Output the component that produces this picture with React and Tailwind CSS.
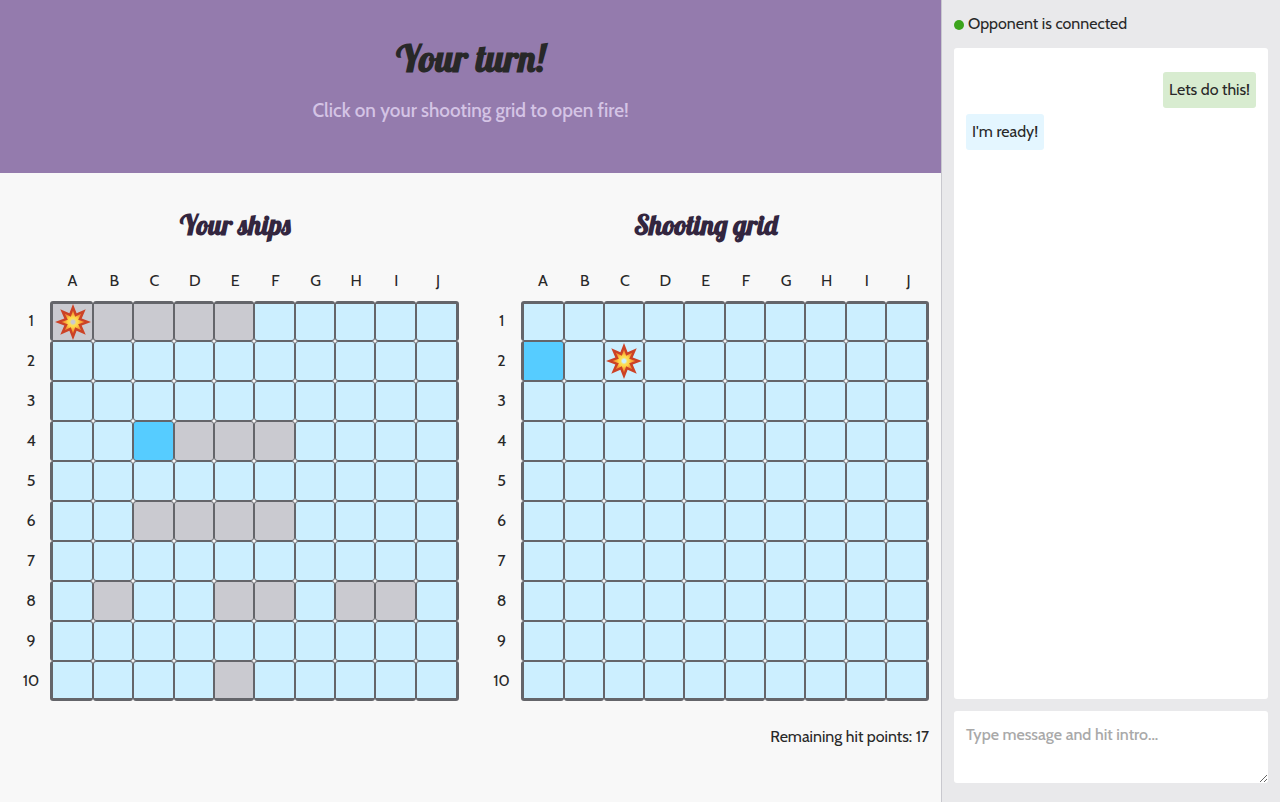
const COLUMNS = ["A", "B", "C", "D", "E", "F", "G", "H", "I", "J"];
const ROWS = [1, 2, 3, 4, 5, 6, 7, 8, 9, 10];

const OWN_CELLS = {
  A1: "hit", B1: "ship", C1: "ship", D1: "ship", E1: "ship",
  C4: "miss", D4: "ship", E4: "ship", F4: "ship",
  C6: "ship", D6: "ship", E6: "ship", F6: "ship",
  B8: "ship", E8: "ship", F8: "ship", H8: "ship", I8: "ship",
  E10: "ship",
};

const SHOTS = { A2: "miss", C2: "strike" };

const FILL = {
  water: "bg-[#ccefff]",
  ship: "bg-[#cacad0]",
  hit: "bg-[#cacad0]",
  strike: "bg-[#ccefff]",
  miss: "bg-[#56ccff]",
};

const CENTER = { hit: "#cacad0", strike: "#ccefff" };

function star(outer, inner) {
  return Array.from({ length: 16 }, (_, i) => {
    const radius = i % 2 ? inner : outer;
    const angle = (i * Math.PI) / 8;
    return `${(18 + radius * Math.sin(angle)).toFixed(2)},${(18 - radius * Math.cos(angle)).toFixed(2)}`;
  }).join(" ");
}

function Explosion({ state }) {
  const flame = `flame-${state}`;
  return (
    <svg viewBox="0 0 36 36" className="h-9 w-9 shrink-0" aria-hidden="true">
      <defs>
        <radialGradient id={flame} cx="18" cy="18" r="12" gradientUnits="userSpaceOnUse">
          <stop offset="0" stopColor={CENTER[state]} />
          <stop offset="0.14" stopColor={CENTER[state]} />
          <stop offset="0.28" stopColor="#fbe05a" />
          <stop offset="0.45" stopColor="#fdd348" />
          <stop offset="0.65" stopColor="#f9a93a" />
          <stop offset="1" stopColor="#e8702e" />
        </radialGradient>
      </defs>
      <polygon points={star(18, 9.4)} fill="#cc4226" />
      <polygon points={star(11.6, 5.6)} fill={`url(#${flame})`} />
    </svg>
  );
}

function Board({ title, cells, interactive }) {
  return (
    <section className="min-w-0 flex-1 px-3">
      <h2 className="mb-4 text-center font-['Lobster','Liberation_Serif',serif] text-[27px] leading-10 font-bold text-[#33263f]">
        {title}
      </h2>
      <table className="w-full table-fixed border-separate border-spacing-0">
        <thead>
          <tr className="h-10">
            <td className="w-[38px]" />
            {COLUMNS.map((column, i) => (
              <th key={column} scope="col" className={`py-0 pr-0 pl-0.5 font-normal ${i % 9 === 0 ? "w-[43px]" : ""}`}>
                {column}
              </th>
            ))}
          </tr>
        </thead>
        <tbody>
          {ROWS.map((row) => (
            <tr key={row}>
              <th scope="row" className="p-0 font-normal">{row}</th>
              {COLUMNS.map((column) => {
                const state = cells[column + row] || "water";
                const edges = [
                  row === 1 ? "border-t-3" : "border-t",
                  row === 10 ? "border-b-3" : "border-b",
                  column === "A" ? "border-l-3" : "border-l",
                  column === "J" ? "border-r-3" : "border-r",
                ].join(" ");
                const style = `flex h-10 w-full items-center justify-center rounded-[3px] border-[#64656a] ${edges} ${FILL[state]}`;
                const mark = (state === "hit" || state === "strike") && <Explosion state={state} />;
                return (
                  <td key={column} className="p-0">
                    {interactive ? (
                      <button type="button" aria-label={column + row} className={`${style} cursor-pointer`}>{mark}</button>
                    ) : (
                      <div className={style}>{mark}</div>
                    )}
                  </td>
                );
              })}
            </tr>
          ))}
        </tbody>
      </table>
      {interactive && <p className="mt-6 text-right leading-6">Remaining hit points: 17</p>}
    </section>
  );
}

export default function App() {
  return (
    <div className="flex min-h-screen bg-[#f8f8f8] font-['Cabin','Lato',sans-serif] text-base text-[#282828]">
      <main className="min-w-0 flex-1">
        <header className="bg-[#947bad] px-3 pt-8 pb-12 text-center">
          <h1 className="font-['Lobster','Liberation_Serif',serif] text-[37px] leading-[52px] font-bold">Your turn!</h1>
          <p className="mt-3 text-[19px] leading-[29px] font-medium text-[#d4c4e5]">Click on your shooting grid to open fire!</p>
        </header>
        <div className="flex pt-8">
          <Board title="Your ships" cells={OWN_CELLS} />
          <Board title="Shooting grid" cells={SHOTS} interactive />
        </div>
      </main>
      <aside className="flex w-[339px] shrink-0 flex-col gap-3 border-l border-[#c8c8ce] bg-[#e9e9eb] px-3 pt-3 pb-[19px]">
        <p className="flex items-center gap-1 leading-6">
          <span className="mt-0.5 h-2.5 w-2.5 rounded-full bg-[#3ca41c]" />
          Opponent is connected
        </p>
        <div className="flex flex-1 flex-col gap-1.5 rounded-[3px] bg-white px-3 py-6">
          <p className="self-end rounded-[3px] bg-[#d8ecd0] p-1.5 leading-6">Lets do this!</p>
          <p className="self-start rounded-[3px] bg-[#e4f6ff] p-1.5 leading-6">I'm ready!</p>
        </div>
        <textarea
          aria-label="Message"
          placeholder="Type message and hit intro..."
          className="block h-[72px] w-full resize rounded-[3px] bg-white p-3 leading-6 placeholder:font-medium placeholder:text-[#a9a9a9]"
        />
      </aside>
    </div>
  );
}
